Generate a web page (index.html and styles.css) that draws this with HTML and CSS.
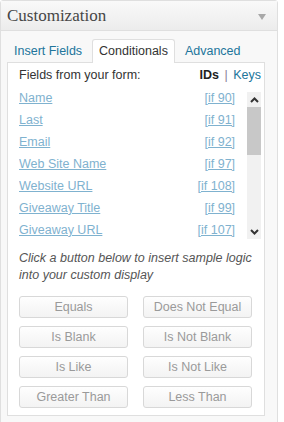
FILE: index.html
```html
<!DOCTYPE html>
<html>
<head>
<meta charset="utf-8">
<link rel="stylesheet" href="styles.css">
</head>
<body>
<div class="panel">
  <div class="panel-header">
    <span class="panel-title">Customization</span>
    <span class="toggle"></span>
  </div>
  <div class="panel-body">
    <div class="tabs">
      <span class="tab">Insert Fields</span>
      <span class="tab active">Conditionals</span>
      <span class="tab">Advanced</span>
    </div>
    <div class="box">
      <div class="fields-head">
        <span>Fields from your form:</span>
        <span class="mode"><b>IDs</b> <span class="sep">|</span> <a class="keys">Keys</a></span>
      </div>
      <div class="list-area">
        <div class="list">
          <div class="row"><a>Name</a><a>[if 90]</a></div>
          <div class="row"><a>Last</a><a>[if 91]</a></div>
          <div class="row"><a>Email</a><a>[if 92]</a></div>
          <div class="row"><a>Web Site Name</a><a>[if 97]</a></div>
          <div class="row"><a>Website URL</a><a>[if 108]</a></div>
          <div class="row"><a>Giveaway Title</a><a>[if 99]</a></div>
          <div class="row"><a>Giveaway URL</a><a>[if 107]</a></div>
        </div>
        <div class="scrollbar">
          <div class="sb-btn"><svg width="9" height="6" viewBox="0 0 9 6"><path d="M1 5 L4.5 1.5 L8 5" fill="none" stroke="#333" stroke-width="2"/></svg></div>
          <div class="sb-thumb"></div>
          <div class="sb-track"></div>
          <div class="sb-btn"><svg width="9" height="6" viewBox="0 0 9 6"><path d="M1 1 L4.5 4.5 L8 1" fill="none" stroke="#333" stroke-width="2"/></svg></div>
        </div>
      </div>
      <p class="hint">Click a button below to insert sample logic into your custom display</p>
      <div class="buttons">
        <button class="btn">Equals</button>
        <button class="btn">Does Not Equal</button>
        <button class="btn">Is Blank</button>
        <button class="btn">Is Not Blank</button>
        <button class="btn">Is Like</button>
        <button class="btn">Is Not Like</button>
        <button class="btn">Greater Than</button>
        <button class="btn">Less Than</button>
      </div>
    </div>
  </div>
</div>
</body>
</html>
```

FILE: styles.css
```css
html, body {
  margin: 0;
  padding: 0;
  background: #fff;
}
body {
  font-family: "Liberation Sans", Arial, sans-serif;
  font-size: 12.5px;
  color: #333;
}
.panel {
  width: 276px;
  height: 440px;
  border: 1px solid #dfdfdf;
  border-radius: 3px 3px 0 0;
  background: #f8f8f8;
}
.panel-header {
  height: 29px;
  border-bottom: 1px solid #dfdfdf;
  background: linear-gradient(#f9f9f9, #ececec);
  display: flex;
  align-items: center;
  justify-content: space-between;
  padding: 0 11px 0 6px;
}
.panel-title {
  font-family: "Liberation Serif", "Times New Roman", serif;
  font-size: 17px;
  color: #464646;
  margin-top: 1px;
}
.toggle {
  width: 0;
  height: 0;
  border-left: 4px solid transparent;
  border-right: 4px solid transparent;
  border-top: 6px solid #a8a8a8;
  margin-top: 2px;
}
.panel-body {
  padding: 8px 0 0 5px;
}
.tabs {
  display: flex;
  gap: 3px;
  margin-bottom: -1px;
  padding-left: 1px;
}
.tab {
  height: 23px;
  line-height: 22px;
  padding: 0 6px;
  color: #21759b;
  border: 1px solid transparent;
  border-bottom: none;
  box-sizing: border-box;
}
.tab.active {
  color: #333;
  background: #fff;
  border-color: #dfdfdf;
  border-radius: 3px 3px 0 0;
  height: 24px;
  position: relative;
}
.box {
  width: 242px;
  margin-left: 1px;
  background: #fff;
  border: 1px solid #dfdfdf;
  padding: 2px 3px 7px 11px;
}
.fields-head {
  height: 20px;
  display: flex;
  justify-content: space-between;
  align-items: center;
  color: #333;
}
.mode b {
  color: #222;
}
.sep {
  color: #8a7f9a;
  margin: 0 2px;
}
.keys {
  color: #21759b;
}
.list-area {
  display: flex;
  gap: 12px;
  margin-top: 1px;
  height: 154px;
}
.list {
  width: 217px;
  overflow: hidden;
}
.row {
  height: 22px;
  display: flex;
  justify-content: space-between;
  align-items: center;
  padding-top: 1px;
  box-sizing: border-box;
}
.row a {
  color: #7fb2cf;
  text-decoration: underline;
}
.scrollbar {
  width: 14px;
  margin-top: 6px;
  height: 147px;
  display: flex;
  flex-direction: column;
  background: #f1f1f1;
}
.sb-btn {
  height: 15px;
  display: flex;
  align-items: center;
  justify-content: center;
}
.sb-thumb {
  height: 48px;
  background: #c8c8c8;
}
.sb-track {
  flex: 1;
}
.hint {
  margin: 10px 0 0;
  font-style: italic;
  color: #555;
  line-height: 17px;
  font-size: 12.5px;
}
.buttons {
  margin-top: 12px;
  width: 233px;
  display: grid;
  grid-template-columns: 109px 109px;
  column-gap: 15px;
  row-gap: 8px;
}
.btn {
  height: 22px;
  border: 1px solid #d8d8d8;
  border-radius: 3px;
  background: linear-gradient(#fefefe, #f3f3f3);
  color: #9a9a9a;
  font-family: "Liberation Sans", Arial, sans-serif;
  font-size: 12.5px;
  padding: 0;
}
```
